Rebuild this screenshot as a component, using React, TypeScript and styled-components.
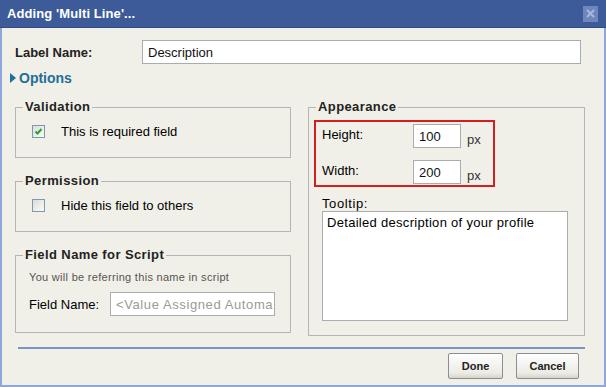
import styled, { createGlobalStyle } from "styled-components";

const Global = createGlobalStyle`
  html, body { margin: 0; padding: 0; background: #f1f0e8; }
  body { font-family: "Liberation Sans", Arial, sans-serif; }
`;

const Window = styled.div`
  width: 606px;
  height: 387px;
  box-sizing: border-box;
  background: #f1f0e8;
  border: 2px solid #8fa6dc;
  border-top: none;
  display: flex;
  flex-direction: column;
  color: #000;
`;

const TitleBar = styled.div`
  height: 28px;
  margin: 0 -2px;
  background: #3d5b99;
  border-bottom: 1px solid #314c86;
  display: flex;
  align-items: center;
  justify-content: space-between;
  padding: 0 8px 0 7px;
  box-sizing: border-box;
`;

const Title = styled.span`
  color: #fff;
  font-weight: bold;
  font-size: 13px;
  letter-spacing: 0.1px;
`;

const CloseBox = styled.span`
  width: 15px;
  height: 16px;
  background: #6d86bd;
  display: flex;
  align-items: center;
  justify-content: center;
`;

const Body = styled.div`
  flex: 1;
  padding: 12px 19px 0 11px;
  display: flex;
  flex-direction: column;
`;

const LabelRow = styled.div`
  display: flex;
  align-items: center;
  height: 24px;
`;

const BoldLabel = styled.label`
  width: 127px;
  font-weight: bold;
  font-size: 13px;
  padding-left: 2px;
  color: #222;
`;

const TextInput = styled.div<{ $width: number; $muted?: boolean }>`
  width: ${(p) => p.$width}px;
  height: 24px;
  box-sizing: border-box;
  border: 1px solid #a9adb0;
  background: #fff;
  font-size: 13px;
  padding: 0 5px;
  display: flex;
  align-items: center;
  white-space: nowrap;
  overflow: hidden;
  color: ${(p) => (p.$muted ? "#9a9a9a" : "#111")};
  letter-spacing: ${(p) => (p.$muted ? "0.6px" : "0")};
`;

const OptionsToggle = styled.div`
  display: flex;
  align-items: center;
  gap: 3px;
  margin: 6px 0 0 -3px;
  height: 16px;
  font-weight: bold;
  font-size: 14px;
  color: #1f6f98;
`;

const Columns = styled.div`
  display: grid;
  grid-template-columns: 276px 277px;
  column-gap: 17px;
  margin-top: 14px;
  padding-left: 2px;
`;

const Stack = styled.div`
  display: flex;
  flex-direction: column;
  gap: 16px;
`;

const Group = styled.fieldset<{ $height: number }>`
  margin: 0;
  height: ${(p) => p.$height}px;
  box-sizing: border-box;
  border: 1px solid #b3b6b4;
  border-radius: 0;
  padding: 0 15px 0 16px;
  min-width: 0;
`;

const Legend = styled.legend`
  margin-left: -9px;
  padding: 0 2px;
  font-weight: bold;
  font-size: 13px;
  letter-spacing: 0.4px;
  color: #222;
  line-height: 14px;
`;

const CheckRow = styled.div`
  display: flex;
  align-items: center;
  gap: 16px;
  margin-top: 10px;
  font-size: 13px;
`;

const CheckBox = styled.span`
  width: 11px;
  height: 11px;
  border: 1px solid #7b99b3;
  background: linear-gradient(135deg, #dcdcd6, #fafaf8);
  display: flex;
  align-items: center;
  justify-content: center;
`;

const Hint = styled.div`
  font-size: 11px;
  color: #555;
  letter-spacing: 0.3px;
  margin-top: 9px;
  margin-left: -3px;
`;

const FieldRow = styled.div`
  display: flex;
  align-items: center;
  justify-content: space-between;
  margin: 9px 0 0 -3px;
  font-size: 13px;
`;

const SizeBox = styled.div`
  border: 2px solid #d51f1f;
  width: 181px;
  height: 67px;
  box-sizing: border-box;
  margin: 6px 0 0 -11px;
  padding: 2px 0 0 6px;
  display: grid;
  grid-template-columns: 85px 48px auto;
  grid-template-rows: 24px 24px;
  row-gap: 12px;
  column-gap: 6px;
  font-size: 13px;
`;

const SizeLabel = styled.span`
  align-self: start;
  padding-top: 3px;
`;

const Unit = styled.span`
  align-self: center;
  padding-top: 6px;
  color: #333;
`;

const TooltipLabel = styled.div`
  font-size: 13px;
  margin: 9px 0 0 -3px;
  letter-spacing: 0.6px;
`;

const TextArea = styled.div`
  width: 246px;
  height: 110px;
  box-sizing: border-box;
  margin: 0 0 0 -3px;
  border: 1px solid #a9adb0;
  background: #fff;
  font-size: 13px;
  padding: 3px 4px;
  letter-spacing: 0.3px;
`;

const Footer = styled.div`
  margin-top: 11px;
  margin-left: 5px;
  border-top: 2px solid #7d93c6;
  display: flex;
  justify-content: flex-end;
  gap: 13px;
  padding: 4px 6px 0 0;
`;

const Button = styled.button<{ $width: number }>`
  width: ${(p) => p.$width}px;
  height: 26px;
  border: 1px solid #8a8f95;
  border-radius: 2px;
  background: linear-gradient(#fefefe, #ecebe4 80%, #d6d3c8);
  font-family: inherit;
  font-weight: bold;
  font-size: 11px;
  color: #222;
  padding: 0;
`;

export default function App() {
  return (
    <>
      <Global />
      <Window>
        <TitleBar>
          <Title>Adding 'Multi Line'...</Title>
          <CloseBox>
            <svg width="9" height="9" viewBox="0 0 9 9">
              <path d="M1 1L8 8M8 1L1 8" stroke="#aab8dc" strokeWidth="2" />
            </svg>
          </CloseBox>
        </TitleBar>
        <Body>
          <LabelRow>
            <BoldLabel>Label Name:</BoldLabel>
            <TextInput $width={439}>Description</TextInput>
          </LabelRow>
          <OptionsToggle>
            <svg width="6" height="10" viewBox="0 0 6 10">
              <path d="M0 0L6 5L0 10Z" fill="#1f6f98" />
            </svg>
            Options
          </OptionsToggle>
          <Columns>
            <Stack>
              <Group $height={58}>
                <Legend>Validation</Legend>
                <CheckRow>
                  <CheckBox>
                    <svg width="9" height="9" viewBox="0 0 9 9">
                      <path d="M1.5 4.5L3.5 6.5L7.5 2" stroke="#2da12d" strokeWidth="2" fill="none" />
                    </svg>
                  </CheckBox>
                  This is required field
                </CheckRow>
              </Group>
              <Group $height={58}>
                <Legend>Permission</Legend>
                <CheckRow>
                  <CheckBox />
                  Hide this field to others
                </CheckRow>
              </Group>
              <Group $height={85}>
                <Legend>Field Name for Script</Legend>
                <Hint>You will be referring this name in script</Hint>
                <FieldRow>
                  Field Name:
                  <TextInput $width={165} $muted>
                    &lt;Value Assigned Automa
                  </TextInput>
                </FieldRow>
              </Group>
            </Stack>
            <Group $height={236}>
              <Legend>Appearance</Legend>
              <SizeBox>
                <SizeLabel>Height:</SizeLabel>
                <TextInput $width={48}>100</TextInput>
                <Unit>px</Unit>
                <SizeLabel>Width:</SizeLabel>
                <TextInput $width={48}>200</TextInput>
                <Unit>px</Unit>
              </SizeBox>
              <TooltipLabel>Tooltip:</TooltipLabel>
              <TextArea>Detailed description of your profile</TextArea>
            </Group>
          </Columns>
          <Footer>
            <Button $width={55}>Done</Button>
            <Button $width={63}>Cancel</Button>
          </Footer>
        </Body>
      </Window>
    </>
  );
}
